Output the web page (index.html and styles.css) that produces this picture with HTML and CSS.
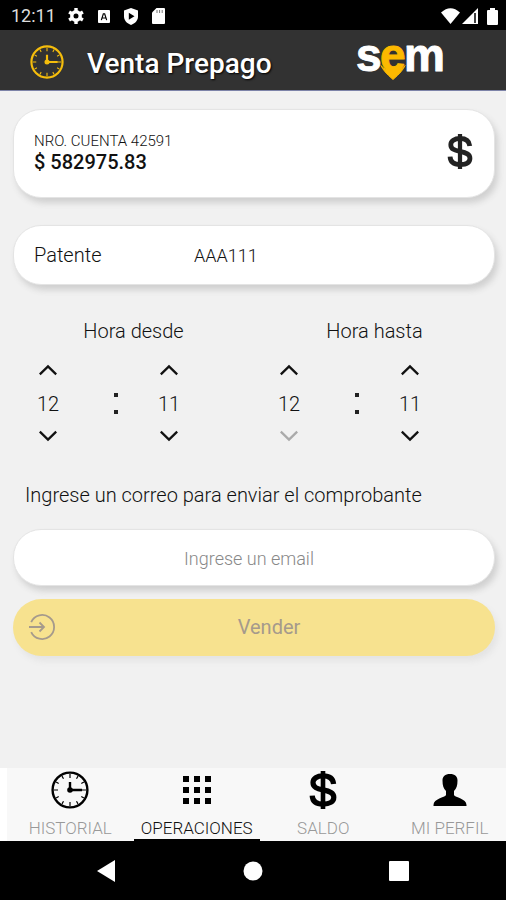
FILE: index.html
```html
<!DOCTYPE html>
<html lang="es">
<head>
<meta charset="utf-8">
<meta name="viewport" content="width=device-width, initial-scale=1">
<title>Venta Prepago</title>
<link rel="stylesheet" href="styles.css">
</head>
<body>
<svg class="defs" aria-hidden="true">
  <symbol id="clock" viewBox="0 0 38 38">
    <circle class="clock-ring" cx="19" cy="19" r="17.4" fill="none" stroke="currentColor"/>
    <g class="clock-ticks" fill="none" stroke="currentColor">
      <path d="M19 3v4M19 31v4M3 19h4M31 19h4M11 5.1l1.5 2.6M25.5 30.3l1.5 2.6M5.1 11l2.6 1.5M30.3 25.5l2.6 1.5M27 5.1l-1.5 2.6M12.5 30.3L11 32.9M32.9 11l-2.6 1.5M7.7 25.5L5.1 27"/>
    </g>
    <path class="clock-hands" d="M19 11v8h12" fill="none" stroke="currentColor"/>
    <circle cx="19" cy="19" r="2.8" fill="currentColor"/>
  </symbol>
  <symbol id="dollar" viewBox="0 0 28 38">
    <path d="M14 0v38" fill="none" stroke="currentColor" stroke-width="4.6"/>
    <path d="M24.6 13C24 7.500 20 4.900 14 4.900C8 4.900 4 7.600 4 11.600C4 16.400 8 17.700 14 18.900C21 20.300 24.800 21.800 24.800 26.200C24.800 30.800 20.500 33.100 14 33.100C7.500 33.100 3.500 30.200 3.200 24.600" fill="none" stroke="currentColor" stroke-width="5.200"/>
  </symbol>
  <symbol id="up" viewBox="0 0 18 11"><path d="M1.5 9.5L9 2.2l7.5 7.3" fill="none" stroke="currentColor" stroke-width="2.1"/></symbol>
  <symbol id="down" viewBox="0 0 18 11"><path d="M1.5 1.5L9 8.8l7.5-7.3" fill="none" stroke="currentColor" stroke-width="2.1"/></symbol>
</svg>

<div class="status-bar">
  <div class="status-group">
    <span class="status-time">12:11</span>
    <svg width="16" height="16" viewBox="0 0 16 16"><circle cx="8" cy="8" r="4.2" fill="none" stroke="#fff" stroke-width="3.4"/><path d="M8 0v3M8 13v3M1.1 4l2.6 1.5M12.3 10.5l2.6 1.5M14.9 4l-2.6 1.5M3.7 10.5L1.1 12" stroke="#fff" stroke-width="3.4"/></svg>
    <svg width="12" height="13" viewBox="0 0 13 14"><rect width="13" height="14" rx="1" fill="#fff"/><path d="M3.6 11l2.2-7h1.4l2.2 7M4.8 8.6h3.4" fill="none" stroke="#000" stroke-width="1.3"/></svg>
    <svg width="14" height="17" viewBox="0 0 14 17"><path d="M7 0l7 2.6v6c0 4-3 7-7 8.4C3 15.600 0 12.600 0 8.600v-6z" fill="#fff"/><path d="M4.800 4.800v7L10.500 8.300z" fill="#000"/></svg>
    <svg width="13" height="16" viewBox="0 0 13 16"><path d="M4.500 0H12a1 1 0 0 1 1 1v14a1 1 0 0 1-1 1H1a1 1 0 0 1-1-1V4.500z" fill="#fff"/><path d="M5 2v3M7.600 2v3M10.200 2v3" stroke="#777" stroke-width="1"/></svg>
  </div>
  <div class="status-group status-right">
    <svg width="19" height="16" viewBox="0 0 19 16"><path d="M0 4.500Q9.500-4 19 4.500L9.500 16z" fill="#fff"/></svg>
    <svg width="17" height="16" viewBox="0 0 17 16"><path d="M0 16L16 0v16z" fill="#fff"/><path d="M13 5v10" stroke="#000" stroke-width="1.500"/></svg>
    <svg class="icon-battery" width="11" height="17" viewBox="0 0 11 17"><path d="M3 0h5v2h2a1 1 0 0 1 1 1v13a1 1 0 0 1-1 1H1a1 1 0 0 1-1-1V3a1 1 0 0 1 1-1h2z" fill="#fff"/></svg>
  </div>
</div>

<header class="app-bar">
  <svg class="app-clock"><use href="#clock"/></svg>
  <h1>Venta Prepago</h1>
  <svg class="logo" width="90" height="60" viewBox="0 0 90 60">
    <text class="logo-text" x="0" y="41">s</text>
    <text class="logo-text" x="48" y="41">m</text>
    <path d="M25 35.500Q29 41 37 40Q45 41 49 35.500Q47 41 37 49.500Q27 41 25 35.500z" fill="#fcb900" stroke="#fcb900" stroke-linejoin="round"/>
    <text class="logo-text logo-pin" x="24" y="41">e</text>
  </svg>
</header>

<main>
  <section class="card account">
    <div>
      <p class="account-number">NRO. CUENTA 42591</p>
      <p class="account-balance">$ 582975.83</p>
    </div>
    <svg class="account-icon"><use href="#dollar"/></svg>
  </section>

  <div class="card plate">
    <label for="plate">Patente</label>
    <input id="plate" type="text" value="AAA111">
  </div>

  <div class="times">
    <fieldset>
      <legend>Hora desde</legend>
      <div class="time">
        <div class="spinner">
          <button type="button" aria-label="Subir hora desde"><svg><use href="#up"/></svg></button>
          <input type="text" aria-label="Hora desde, horas" value="12">
          <button type="button" aria-label="Bajar hora desde"><svg><use href="#down"/></svg></button>
        </div>
        <span class="colon"></span>
        <div class="spinner">
          <button type="button" aria-label="Subir minutos desde"><svg><use href="#up"/></svg></button>
          <input type="text" aria-label="Hora desde, minutos" value="11">
          <button type="button" aria-label="Bajar minutos desde"><svg><use href="#down"/></svg></button>
        </div>
      </div>
    </fieldset>
    <fieldset>
      <legend>Hora hasta</legend>
      <div class="time">
        <div class="spinner">
          <button type="button" aria-label="Subir hora hasta"><svg><use href="#up"/></svg></button>
          <input type="text" aria-label="Hora hasta, horas" value="12">
          <button type="button" aria-label="Bajar hora hasta" disabled><svg><use href="#down"/></svg></button>
        </div>
        <span class="colon"></span>
        <div class="spinner">
          <button type="button" aria-label="Subir minutos hasta"><svg><use href="#up"/></svg></button>
          <input type="text" aria-label="Hora hasta, minutos" value="11">
          <button type="button" aria-label="Bajar minutos hasta"><svg><use href="#down"/></svg></button>
        </div>
      </div>
    </fieldset>
  </div>

  <label class="email-label" for="email">Ingrese un correo para enviar el comprobante</label>
  <input class="card email" id="email" type="email" placeholder="Ingrese un email">
  <button class="sell" type="button" disabled>
    <svg viewBox="0 0 28 28"><path d="M3.200 9A12 12 0 1 1 3.200 19" fill="none" stroke="currentColor" stroke-width="1.800"/><path d="M1 14h15M11.500 9.500L16 14l-4.500 4.500" fill="none" stroke="currentColor" stroke-width="1.800"/></svg>
    <span>Vender</span>
  </button>
</main>

<nav class="tabs">
  <div class="tab-track">
    <a href="#historial"><svg><use href="#clock"/></svg>HISTORIAL</a>
    <a class="active" href="#operaciones"><svg viewBox="0 0 38 38"><path d="M5 8h6M16 8h6M27 8h6M5 19h6M16 19h6M27 19h6M5 30h6M16 30h6M27 30h6" stroke="currentColor" stroke-width="6"/></svg>OPERACIONES</a>
    <a href="#saldo"><svg><use href="#dollar"/></svg>SALDO</a>
    <a href="#perfil"><svg viewBox="0 0 38 38"><path d="M19 3c5 0 7.500 2.500 7.500 6.500 0 5-1 8-3.500 10.500v4c1 2.500 12.500 3.500 12.500 10v1h-33v-1c0-6.500 11.500-7.500 12.500-10v-4c-2.500-2.500-3.500-5.500-3.500-10.500C11.500 5.500 14 3 19 3z" fill="currentColor"/></svg>MI PERFIL</a>
  </div>
</nav>

<div class="system-nav">
  <button type="button" aria-label="Atrás"><svg viewBox="0 0 22 22"><path d="M1 11L19 0v22z" fill="#fff"/></svg></button>
  <button type="button" aria-label="Inicio"><svg viewBox="0 0 22 22"><circle cx="11" cy="11" r="9.500" fill="#fff"/></svg></button>
  <button type="button" aria-label="Recientes"><svg viewBox="0 0 22 22"><rect x="1" y="1" width="20" height="20" rx="1" fill="#fff"/></svg></button>
</div>
</body>
</html>
```

FILE: styles.css
```css
* { box-sizing: border-box; }

body {
  margin: 0;
  min-height: 100vh;
  display: flex;
  flex-direction: column;
  background: #f1f1f1;
  color: #111;
  font-family: Roboto, sans-serif;
  font-size: 20px;
  font-weight: 300;
  line-height: 24px;
}

button, input { font: inherit; color: inherit; border: 0; }
button { padding: 0; background: none; }
svg { display: block; flex: none; }
.defs { position: absolute; width: 0; height: 0; }

.status-bar {
  height: 30px;
  padding: 2px 8px 0 11px;
  display: flex;
  align-items: center;
  justify-content: space-between;
  background: #000;
  color: #ddd;
}
.status-group { display: flex; align-items: center; gap: 14px; }
.status-right { gap: 2px; }
.status-time { font-size: 18px; font-weight: 400; margin-right: -2px; }
.icon-battery { margin-left: 6px; }

.app-bar {
  height: 61px;
  padding: 0 60px 0 30px;
  display: flex;
  align-items: center;
  background: #323232;
  border-bottom: 1px solid #7d83a8;
}
.app-clock { width: 34px; height: 34px; color: #f5bd0c; margin-top: 4px; }
.app-bar h1 {
  margin: 8px 0 0 23px;
  font-size: 28px;
  line-height: 32px;
  font-weight: 500;
  color: #fff;
  text-shadow: 1px 1px 2px #000;
}
.logo { margin-left: auto; }
.logo-text {
  font-family: "Liberation Sans", sans-serif;
  font-size: 46px;
  font-weight: 700;
  fill: #fff;
  stroke: #fff;
  stroke-width: 1px;
  stroke-linejoin: round;
}
.logo-pin { fill: #fcb900; stroke: #fcb900; }

main {
  flex: 1;
  display: flex;
  flex-direction: column;
  padding: 18px 11px 0 13px;
}
.card {
  background: #fff;
  border: 1px solid #e4e4e4;
  border-radius: 28px;
  box-shadow: 3px 5px 6px #d0d0d0;
}
.account {
  min-height: 89px;
  padding: 0 20px 4px;
  display: flex;
  align-items: center;
  justify-content: space-between;
}
.account p { margin: 0; line-height: 21px; }
.account-number { font-size: 15px; }
.account-balance { font-size: 20px; font-weight: 500; }
.account-icon { width: 28px; height: 35px; color: #222; }

.plate {
  height: 60px;
  margin-top: 27px;
  padding: 0 20px;
  display: grid;
  grid-template-columns: 160px 1fr;
  align-items: center;
}
.plate input { width: 100%; padding: 2px 0 0; font-size: 18px; background: none; }

.times { display: grid; grid-template-columns: 1fr 1fr; margin-top: 34px; }
fieldset { min-width: 0; margin: 0; padding: 0; border: 0; }
legend { width: 100%; padding: 0; text-align: center; }
.time {
  display: grid;
  grid-template-columns: 70fr 66fr 40fr 65fr;
  align-items: center;
  margin-top: 21px;
}
.spinner { display: flex; flex-direction: column; align-items: center; gap: 12px; }
.spinner input { width: 100%; height: 30px; padding: 2px 0 0; text-align: center; background: none; }
.spinner svg { width: 20px; height: 12px; }
.spinner button:disabled { color: #aaa; }
.colon {
  width: 4px;
  height: 21px;
  justify-self: center;
  border-top: 4px solid #222;
  border-bottom: 4px solid #222;
}

.email-label { margin: 41px 12px 0; }
.email {
  width: 100%;
  height: 57px;
  margin-top: 22px;
  padding: 2px 18px 0 8px;
  text-align: center;
  font-size: 18px;
}
.email::placeholder { color: #888; opacity: 1; }
.sell {
  height: 57px;
  margin-top: 13px;
  padding: 0 13px 2px 15px;
  display: flex;
  align-items: center;
  border-radius: 29px;
  background: #f7e28f;
  color: #a59a8c;
  font-weight: 400;
  box-shadow: 3px 5px 6px #e4e4e4;
}
.sell svg { width: 28px; height: 28px; }
.sell span { flex: 1; }

.tabs { overflow: hidden; background: #fff; }
.tab-track {
  display: grid;
  grid-template-columns: repeat(4, 1fr);
  margin: 0 -7px 0 7px;
  background: #f8f8f8;
}
.tabs a {
  height: 73px;
  padding-top: 3px;
  display: flex;
  flex-direction: column;
  align-items: center;
  gap: 7px;
  border-bottom: 2px solid transparent;
  color: #999;
  font-size: 17px;
  text-decoration: none;
}
.tabs svg { width: 38px; height: 38px; color: #000; }
.tabs .active { color: #111; border-color: #000; }

.system-nav {
  height: 59px;
  display: flex;
  align-items: center;
  justify-content: center;
  gap: 124px;
  background: #000;
}
.system-nav svg { width: 22px; height: 22px; }

.clock-ring { stroke-width: 2.4px; }
.clock-ticks { stroke-width: 1.2px; }
.clock-hands { stroke-width: 2.4px; }
```
